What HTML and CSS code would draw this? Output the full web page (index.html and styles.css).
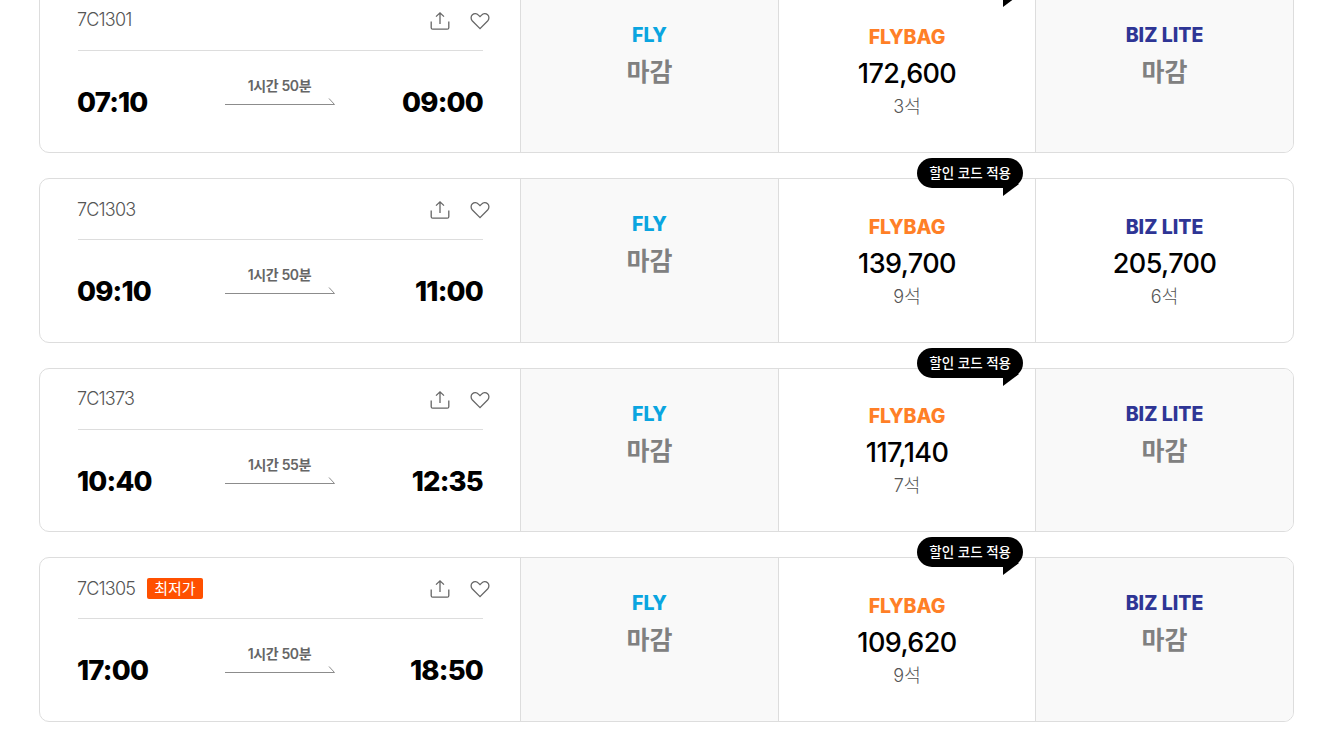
FILE: index.html
```html
<!DOCTYPE html>
<html lang="ko">
<head>
  <meta charset="UTF-8">
  <title>항공편 선택</title>
  <link rel="stylesheet" href="styles.css">
</head>
<body>
  <svg class="icon-defs" width="0" height="0">
    <symbol id="i-share" viewBox="0 0 20 20">
      <path d="M10 13V2M6 5.6 10 1.8l4 3.8M1.2 10.5v6.2c0 .9.6 1.5 1.5 1.5h14.6c.9 0 1.5-.6 1.5-1.5v-6.2" fill="none" stroke="currentColor" stroke-width="1.3"/>
    </symbol>
    <symbol id="i-heart" viewBox="0 0 20 20">
      <path d="M10 17.6 2.4 10C.6 8.100.7 5.300 2.400 3.800c1.800-1.600 4.400-1.300 6 .3L10 5.700l1.600-1.600c1.600-1.600 4.200-1.900 6-.3 1.700 1.500 1.800 4.300 0 6.200z" fill="none" stroke="currentColor" stroke-width="1.300"/>
    </symbol>
    <symbol id="i-arrow" viewBox="0 0 110 8">
      <path d="M0 7.500H109.500L104 1.500" fill="none" stroke="currentColor" stroke-width="1"/>
    </symbol>
  </svg>

  <div class="flight-list">

    <div class="flight">
      <div class="info">
        <div class="info-top">
          <span class="flight-no">7C1301</span>
          <span class="actions">
            <svg class="icon"><use href="#i-share"/></svg>
            <svg class="icon"><use href="#i-heart"/></svg>
          </span>
        </div>
        <div class="times">
          <span class="time">07:10</span>
          <div class="duration">
            <span>1시간 50분</span>
            <svg class="arrow"><use href="#i-arrow"/></svg>
          </div>
          <span class="time">09:00</span>
        </div>
      </div>
      <div class="fare closed"><b class="fare-name fly">FLY</b><span class="closed-text">마감</span></div>
      <div class="fare">
        <span class="promo">할인 코드 적용</span>
        <b class="fare-name flybag">FLYBAG</b><span class="price">172,600</span><span class="seats">3석</span>
      </div>
      <div class="fare closed"><b class="fare-name biz">BIZ LITE</b><span class="closed-text">마감</span></div>
    </div>

    <div class="flight">
      <div class="info">
        <div class="info-top">
          <span class="flight-no">7C1303</span>
          <span class="actions">
            <svg class="icon"><use href="#i-share"/></svg>
            <svg class="icon"><use href="#i-heart"/></svg>
          </span>
        </div>
        <div class="times">
          <span class="time">09:10</span>
          <div class="duration">
            <span>1시간 50분</span>
            <svg class="arrow"><use href="#i-arrow"/></svg>
          </div>
          <span class="time">11:00</span>
        </div>
      </div>
      <div class="fare closed"><b class="fare-name fly">FLY</b><span class="closed-text">마감</span></div>
      <div class="fare">
        <span class="promo">할인 코드 적용</span>
        <b class="fare-name flybag">FLYBAG</b><span class="price">139,700</span><span class="seats">9석</span>
      </div>
      <div class="fare"><b class="fare-name biz">BIZ LITE</b><span class="price">205,700</span><span class="seats">6석</span></div>
    </div>

    <div class="flight">
      <div class="info">
        <div class="info-top">
          <span class="flight-no">7C1373</span>
          <span class="actions">
            <svg class="icon"><use href="#i-share"/></svg>
            <svg class="icon"><use href="#i-heart"/></svg>
          </span>
        </div>
        <div class="times">
          <span class="time">10:40</span>
          <div class="duration">
            <span>1시간 55분</span>
            <svg class="arrow"><use href="#i-arrow"/></svg>
          </div>
          <span class="time">12:35</span>
        </div>
      </div>
      <div class="fare closed"><b class="fare-name fly">FLY</b><span class="closed-text">마감</span></div>
      <div class="fare">
        <span class="promo">할인 코드 적용</span>
        <b class="fare-name flybag">FLYBAG</b><span class="price">117,140</span><span class="seats">7석</span>
      </div>
      <div class="fare closed"><b class="fare-name biz">BIZ LITE</b><span class="closed-text">마감</span></div>
    </div>

    <div class="flight">
      <div class="info">
        <div class="info-top">
          <span class="flight-no">7C1305</span>
          <span class="lowest">최저가</span>
          <span class="actions">
            <svg class="icon"><use href="#i-share"/></svg>
            <svg class="icon"><use href="#i-heart"/></svg>
          </span>
        </div>
        <div class="times">
          <span class="time">17:00</span>
          <div class="duration">
            <span>1시간 50분</span>
            <svg class="arrow"><use href="#i-arrow"/></svg>
          </div>
          <span class="time">18:50</span>
        </div>
      </div>
      <div class="fare closed"><b class="fare-name fly">FLY</b><span class="closed-text">마감</span></div>
      <div class="fare">
        <span class="promo">할인 코드 적용</span>
        <b class="fare-name flybag">FLYBAG</b><span class="price">109,620</span><span class="seats">9석</span>
      </div>
      <div class="fare closed"><b class="fare-name biz">BIZ LITE</b><span class="closed-text">마감</span></div>
    </div>

  </div>
</body>
</html>
```

FILE: styles.css
```css
html, body {
  height: 100%;
  overflow: hidden;
}
body {
  font-family: Inter, "Noto Sans CJK KR", sans-serif;
  margin: 0;
  background-color: #fff;
  color: #000;
}
.icon-defs {
  position: absolute;
}
.flight-list {
  display: flex;
  flex-direction: column;
  gap: 25px;
  margin: -11.5px 46px 0 39px;
}
.flight {
  display: grid;
  grid-template-columns: 480px 258px 257px 1fr;
  grid-template-rows: minmax(0, 1fr);
  height: 164.5px;
  box-sizing: border-box;
  border: 1px solid #ddd;
  border-radius: 10px;
  background-color: #fff;
}
.info {
  padding: 0 37px 0 38px;
}
.info-top {
  display: flex;
  align-items: center;
  gap: 12px;
  height: 61px;
  border-bottom: 1px solid #ddd;
  box-sizing: border-box;
}
.flight-no {
  font-size: 18px;
  font-weight: 300;
  letter-spacing: -0.8px;
  margin-left: -1px;
  color: #555;
}
.lowest {
  background-color: #ff5000;
  color: #fff;
  font-size: 15px;
  line-height: 21px;
  padding: 0 7px;
  border-radius: 2px;
}
.actions {
  display: flex;
  gap: 20px;
  margin-left: auto;
  margin-right: -7px;
  margin-top: 2px;
  color: #666;
}
.icon {
  width: 20px;
  height: 20px;
}
.times {
  display: flex;
  justify-content: space-between;
  align-items: center;
  box-sizing: border-box;
  height: 101.5px;
  padding-top: 1px;
}
.time {
  font-size: 27.5px;
  font-weight: 800;
  width: 90px;
  letter-spacing: -0.8px;
}
.time:first-child {
  margin-left: -1px;
}
.time:last-child {
  text-align: right;
}
.duration {
  display: flex;
  flex-direction: column;
  align-items: center;
  font-size: 14px;
  font-weight: 600;
  letter-spacing: -0.4px;
  color: #666;
  margin-bottom: 24px;
  margin-right: 1px;
}
.arrow {
  width: 110px;
  height: 8px;
  margin-top: 2px;
  color: #8c8c8c;
}
.fare {
  position: relative;
  display: flex;
  flex-direction: column;
  align-items: center;
  justify-content: center;
  border-left: 1px solid #ddd;
  padding-top: 2px;
}
.fare.closed {
  background-color: #f9f9f9;
  justify-content: flex-start;
  padding-top: 32px;
}
.flight .fare:last-child {
  border-radius: 0 9px 9px 0;
}
.fare-name {
  font-size: 19.5px;
  font-weight: 800;
  line-height: 26px;
  margin-bottom: 3px;
}
.fly { color: #0aa5e0; }
.flybag { color: #ff7f27; }
.biz { color: #2e3595; }
.closed-text {
  font-size: 25px;
  font-weight: 600;
  line-height: 42px;
  color: #808080;
}
.price {
  font-size: 27px;
  font-weight: 500;
  letter-spacing: -0.6px;
  line-height: 42px;
}
.seats {
  font-size: 18px;
  font-weight: 300;
  line-height: 24px;
  color: #555;
}
.promo {
  position: absolute;
  top: -21px;
  right: 12px;
  background-color: #000;
  color: #fff;
  font-size: 13.5px;
  font-weight: 500;
  line-height: 30px;
  padding: 0 12px;
  border-radius: 15px;
  white-space: nowrap;
}
.promo::after {
  content: "";
  position: absolute;
  right: 4px;
  top: 26px;
  border-right: 16px solid transparent;
  border-top: 12px solid #000;
}
```
